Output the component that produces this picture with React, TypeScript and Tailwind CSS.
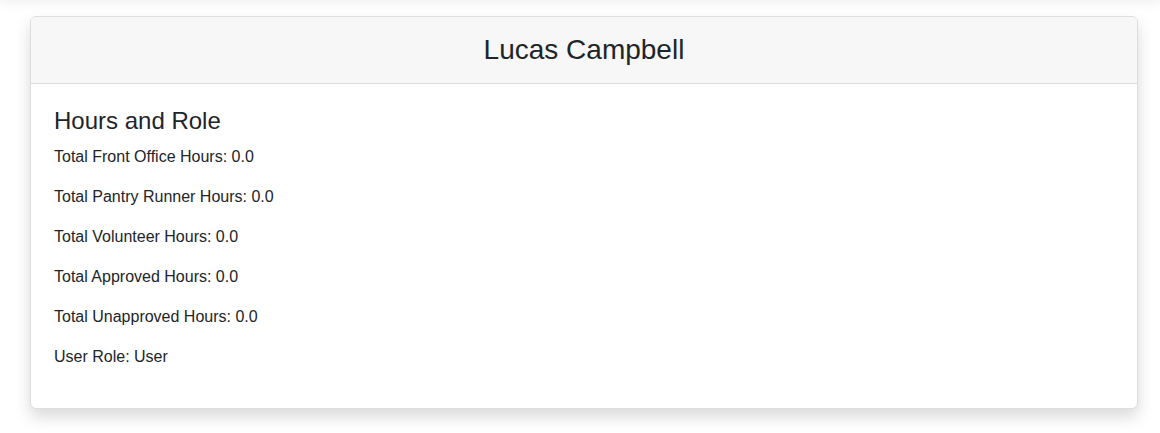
import React from "react";

export default function App() {
  const rows = [
    "Total Front Office Hours: 0.0",
    "Total Pantry Runner Hours: 0.0",
    "Total Volunteer Hours: 0.0",
    "Total Approved Hours: 0.0",
    "Total Unapproved Hours: 0.0",
    "User Role: User",
  ];
  return (
    <div
      className="min-h-[433px] bg-white text-[#212529] overflow-hidden"
      style={{ fontFamily: '"Liberation Sans", Arial, sans-serif' }}
    >
      <div className="h-[40px] -mt-[40px] bg-white shadow-[0_0.125rem_0.75rem_rgba(0,0,0,0.07)]" />
      <div className="pt-[16px] pl-[30px] pr-[22px] pb-[25px]">
        <div className="rounded-[6px] border border-[#dedede] bg-white shadow-[0_0.5rem_1rem_rgba(0,0,0,0.15)] overflow-hidden">
          <div className="bg-[#f7f7f7] border-b border-[#dcdcdc] py-[16px] px-[16px] text-center">
            <h3 className="text-[28px] leading-[1.2]">Lucas Campbell</h3>
          </div>
          <div className="px-[23px] pt-[23px] pb-[23px]">
            <h4 className="text-[24px] leading-[1.2] mb-[10px]">Hours and Role</h4>
            {rows.map((r) => (
              <p key={r} className="text-[16px] leading-[24px] mb-[16px]">
                {r}
              </p>
            ))}
          </div>
        </div>
      </div>
    </div>
  );
}
